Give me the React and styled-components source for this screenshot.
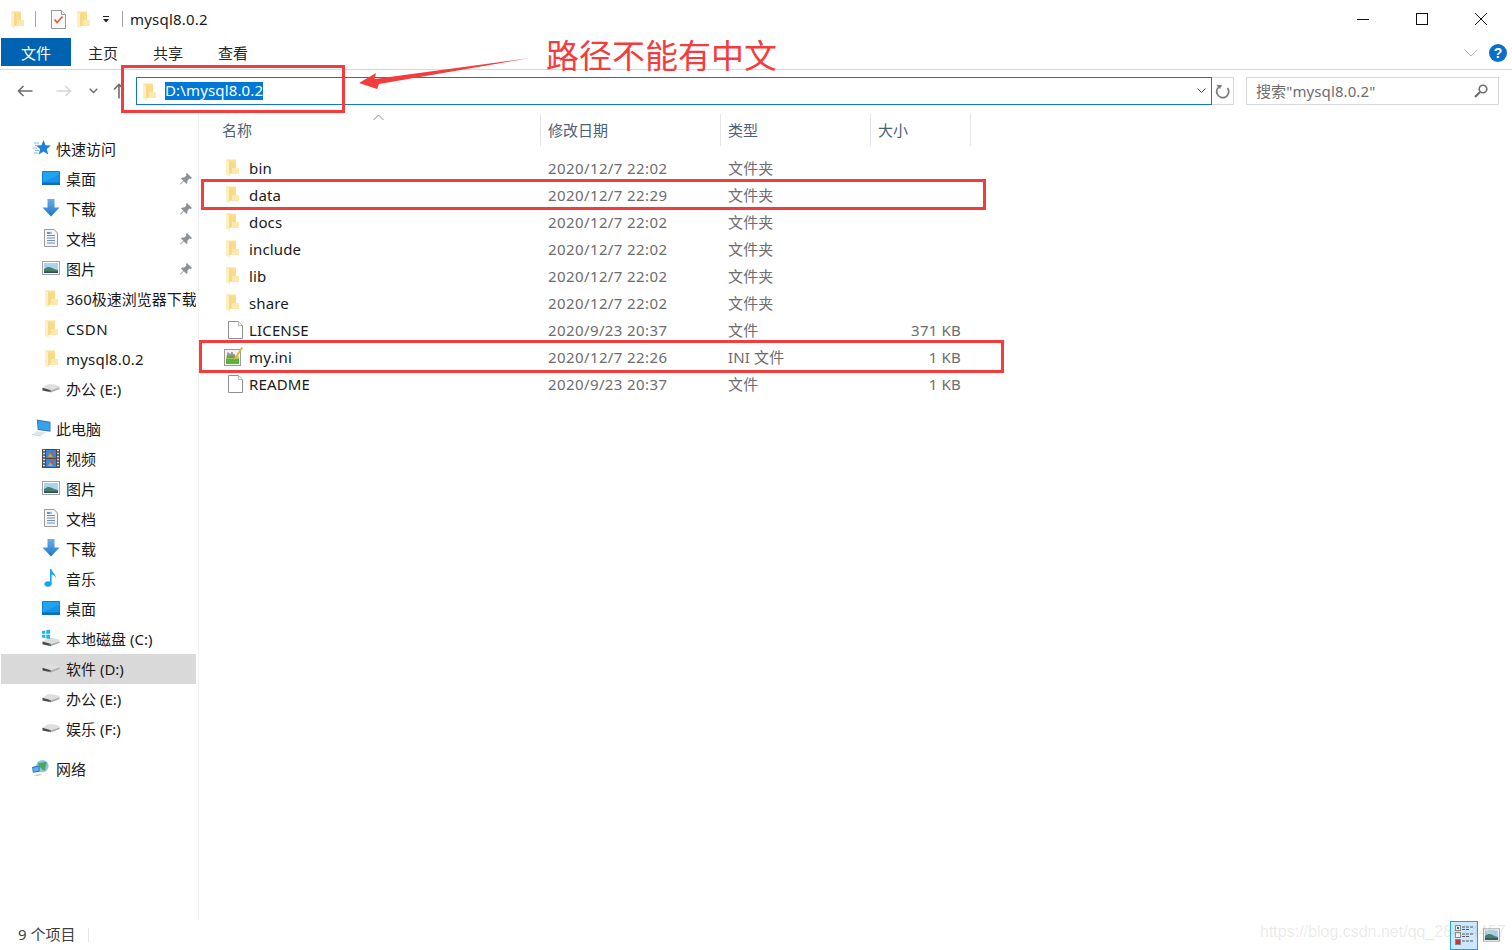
import React from 'react';
import styled, { createGlobalStyle } from 'styled-components';

const GlobalStyle = createGlobalStyle`
  html, body {
    margin: 0;
    padding: 0;
    background: #fff;
    overflow: hidden;
  }
  body {
    font-family: "Noto Sans", "Noto Sans CJK SC", sans-serif;
    font-size: 15px;
    color: #1a1a1a;
  }
`;

const FolderIcon = () => (
  <svg width="13" height="17" viewBox="0 0 13 17">
    <path d="M0 .5 H10 V9 H13 V14.5 H3.5 V17 L0 15.5 Z" fill="#fbe08f" />
    <path d="M3.5 2.5 H10 V9 H13 V14.5 H3.5 Z" fill="#f9dc8a" />
    <path d="M10 9 H13 V14.5 H6 V9 Z" fill="#fde9ae" />
    <path d="M0 .5 L3.5 2.5 V17 L0 15.5 Z" fill="#feefc0" />
    <path d="M3.5 2.5 H4.3 V15 H3.5 Z" fill="#eccb78" />
  </svg>
);

const ChecklistIcon = () => (
  <svg width="15" height="19" viewBox="0 0 15 19">
    <path d="M.5.5 H10.5 L14.5 4.5 V18.5 H.5 Z" fill="#f8f8f8" stroke="#9a9a9a" />
    <path d="M10.5.5 V4.5 H14.5" fill="#fff" stroke="#9a9a9a" />
    <path d="M3.5 9.5 L6 12.5 L11.5 6.5" fill="none" stroke="#e4572e" strokeWidth="1.6" />
  </svg>
);

const DesktopIcon = () => (
  <svg width="18" height="14" viewBox="0 0 18 14">
    <rect x="0" y="0" width="18" height="13" rx="1" fill="#0d7fd8" />
    <rect x="1" y="1" width="16" height="10" fill="#1fa4f2" />
    <path d="M1 11 L17 4 V11 Z" fill="#1794e6" />
    <rect x="0" y="12" width="18" height="2" fill="#0f6fb8" />
  </svg>
);

const DownloadIcon = () => (
  <svg width="18" height="18" viewBox="0 0 18 18">
    <defs>
      <linearGradient id="downArrow" x1="0" y1="0" x2="0" y2="1">
        <stop offset="0" stopColor="#6aaeea" />
        <stop offset="1" stopColor="#1f74c8" />
      </linearGradient>
    </defs>
    <path d="M5.5 0 H12.5 V8.5 H17.5 L9 17.5 L.5 8.5 H5.5 Z" fill="url(#downArrow)" />
  </svg>
);

const DocumentIcon = () => (
  <svg width="14" height="18" viewBox="0 0 14 18">
    <path d="M.5.5 H10 L13.5 4 V17.5 H.5 Z" fill="#f4f4f4" stroke="#9c9c9c" />
    <path d="M3 4 H8 M3 6.5 H11 M3 9 H11 M3 11.5 H11 M3 14 H11" stroke="#6b8fb5" strokeWidth="1" />
    <path d="M3 4 H6" stroke="#2d8ad8" strokeWidth="1.4" />
  </svg>
);

const PictureIcon = () => (
  <svg width="18" height="14" viewBox="0 0 18 14">
    <rect x=".5" y=".5" width="17" height="13" fill="#fff" stroke="#a2a2a2" />
    <rect x="2" y="2" width="14" height="10" fill="#a9d4ee" />
    <path d="M2 8 C6 4.5 9 6 12 8 L16 9 V12 H2 Z" fill="#4c7d6a" />
    <path d="M2 10.5 H16 V12 H2 Z" fill="#2a4d5f" />
  </svg>
);

const DriveShape = () => (
  <>
    <path d="M.5 5 L6 1 H12 L18.5 3 V6 L9.5 9.5 L.5 7.5 Z" fill="#dedede" />
    <path d="M9.5 7.6 L18.5 4.6 V6 L9.5 9.5 Z" fill="#a8a8a8" />
    <path d="M.5 4.8 L9.5 7.4 V9.6 L.5 7.6 Z" fill="#4a4a4a" />
    <rect x="7.5" y="7.8" width="2" height="1.2" fill="#4fc04a" />
  </>
);

const DriveIcon = () => (
  <svg width="19" height="10" viewBox="0 0 19 10">
    <DriveShape />
  </svg>
);

const SystemDriveIcon = () => (
  <svg width="19" height="18" viewBox="0 0 19 18">
    <g transform="translate(0 8)">
      <DriveShape />
    </g>
    <path d="M0 1.5 L3.5 1 V4.5 H0 Z M4.5 .8 L8.5 0 V4.5 H4.5 Z M0 5.5 H3.5 V9 L0 8.5 Z M4.5 5.5 H8.5 V10 L4.5 9.2 Z" fill="#19b5ee" />
  </svg>
);

const VideoIcon = () => (
  <svg width="18" height="19" viewBox="0 0 18 19">
    <rect width="18" height="19" fill="#4a4a4a" />
    <path d="M1 1.5 H3 M1 4.5 H3 M1 7.5 H3 M1 10.5 H3 M1 13.5 H3 M1 16.5 H3 M15 1.5 H17 M15 4.5 H17 M15 7.5 H17 M15 10.5 H17 M15 13.5 H17 M15 16.5 H17" stroke="#ddd" strokeWidth="1.4" />
    <rect x="4" y="1" width="10" height="8" fill="#3c86d8" />
    <rect x="4" y="10" width="10" height="8" fill="#3c86d8" />
    <path d="M6 8 L8 4 L11 8 Z M6 17 L8 13 L11 17 Z" fill="#e0a030" />
    <circle cx="10" cy="3.5" r="1.4" fill="#d94a3a" />
    <circle cx="10" cy="12.5" r="1.4" fill="#d94a3a" />
  </svg>
);

const MusicIcon = () => (
  <svg width="14" height="18" viewBox="0 0 14 18">
    <ellipse cx="4" cy="15" rx="3.6" ry="2.7" fill="#12a5f0" />
    <path d="M6 15 V0 H7.4 C7.6 3.5 12.5 4.5 11.6 9.5 C11 6.5 9 6 7.6 5.6 V15 Z" fill="#12a5f0" />
  </svg>
);

const StarIcon = () => (
  <svg width="18" height="16" viewBox="0 0 18 16">
    <path d="M10.5 0 L12.6 5.2 L18 5.6 L13.8 9.1 L15.2 14.6 L10.5 11.6 L5.8 14.6 L7.1 9.1 L3 5.6 L8.4 5.2 Z" fill="#1f80de" />
    <path d="M1 3 H6 M0 8 H4 M2 5.5 H5 M1 13 H5 M2 10.5 H6" stroke="#7fb9ee" strokeWidth="1" />
  </svg>
);

const PcIcon = () => (
  <svg width="20" height="18" viewBox="0 0 20 18">
    <path d="M5 0 L19.5 2.5 V13 L6 11 Z" fill="#3f7fae" />
    <path d="M6.2 1.5 L18.4 3.6 V11.6 L7 10 Z" fill="#35a4ee" />
    <path d="M0 15.5 L6 12.5 L15 13.5 L9 17.5 Z" fill="#dfe4e8" />
    <path d="M0 15.5 L9 17.5 L9 18 L0 16.2 Z" fill="#b9c0c6" />
  </svg>
);

const NetworkIcon = () => (
  <svg width="20" height="18" viewBox="0 0 20 18">
    <circle cx="11" cy="7" r="6.5" fill="#8cc4e6" />
    <path d="M6 3 C9 5 12 2 15 3 C16 6 13 8 14 12 C10 11 8 8 6 3 Z" fill="#4da65a" />
    <path d="M0 8 L8 6 V13 L1 14 Z" fill="#2478c0" />
    <path d="M1 9 L7 7.5 V12 L1.6 13 Z" fill="#5eb0ea" />
    <path d="M2 16.5 L8 15 L11 16 L5 17.8 Z" fill="#c9cfd4" />
  </svg>
);

const PinIcon = () => (
  <svg width="12" height="12" viewBox="0 0 12 12">
    <path d="M7 0 L12 5 L10.8 6 L9.5 5.6 L7.4 7.8 L7.4 10 L6.4 11 L3.8 8.2 L.6 11.6 L0 11 L3.3 7.7 L1 5.4 L2 4.5 L4.2 4.5 L6.4 2.4 L6 1 Z" fill="#8a9199" />
  </svg>
);

const FileIcon = () => (
  <svg width="15" height="18" viewBox="0 0 15 18">
    <path d="M.5.5 H10.5 L14.5 4.5 V17.5 H.5 Z" fill="#fff" stroke="#8f8f8f" />
    <path d="M10.5.5 V4.5 H14.5" fill="#f2f2f2" stroke="#b5b5b5" />
  </svg>
);

const IniIcon = () => (
  <svg width="19" height="19" viewBox="0 0 19 19">
    <rect x=".5" y="2.5" width="16" height="16" fill="#f2f2f2" stroke="#9a9a9a" />
    <rect x="2" y="11" width="13" height="6" fill="#5eb13c" />
    <rect x="2" y="8.5" width="13" height="3" fill="#bcdc7a" />
    <path d="M4 5.5 V11 M6 6.5 V11 M8 5 V11 M10 7 V11" stroke="#444" strokeWidth="1" />
    <path d="M17.5 0 L19 1 L12 11.5 L10 13 L10.5 10.5 Z" fill="#e8b23c" />
  </svg>
);

const Shell = styled.div`
  position: relative;
  display: flex;
  flex-direction: column;
  width: 1512px;
  height: 950px;
  overflow: hidden;
  background: #fff;
`;

const TitleBar = styled.header`
  display: flex;
  align-items: center;
  height: 38px;
  padding-left: 11px;
  flex: none;
`;

const QuickSlot = styled.span`
  display: flex;
  align-items: center;
  justify-content: center;
  margin-left: ${p => p.$gap}px;
`;

const TitleRule = styled.span`
  width: 1px;
  height: 16px;
  background: #a6a6a6;
  margin-left: ${p => p.$gap}px;
`;

const WindowTitle = styled.span`
  margin-left: 7px;
  font-size: 15px;
  letter-spacing: 0.2px;
  color: #1a1a1a;
`;

const WindowButtons = styled.div`
  display: flex;
  margin-left: auto;
  margin-right: 2px;
`;

const WindowButton = styled.button`
  display: flex;
  align-items: center;
  justify-content: center;
  width: 59px;
  height: 38px;
  padding: 0;
  border: 0;
  background: none;
`;

const RibbonTabs = styled.nav`
  display: flex;
  align-items: flex-start;
  height: 31px;
  padding-left: 1px;
  flex: none;
  border-bottom: 1px solid #d9d9d9;
`;

const FileTab = styled.div`
  display: flex;
  align-items: center;
  justify-content: center;
  width: 70px;
  height: 28px;
  margin-right: 17px;
  background: #0063b1;
  color: #fff;
  font-size: 15px;
`;

const RibbonTab = styled.div`
  width: 65px;
  height: 28px;
  line-height: 30px;
  font-size: 15px;
  color: #262626;
`;

const RibbonRight = styled.div`
  display: flex;
  align-items: center;
  gap: 11px;
  margin-left: auto;
  margin-right: 5px;
  height: 30px;
`;

const HelpBadge = styled.span`
  display: flex;
  align-items: center;
  justify-content: center;
  width: 18px;
  height: 18px;
  border-radius: 50%;
  background: #0a6fc9;
  color: #fff;
  font: bold 14px "Liberation Sans", sans-serif;
`;

const AddressRow = styled.div`
  display: flex;
  align-items: center;
  height: 42px;
  flex: none;
`;

const NavButtons = styled.div`
  display: flex;
  align-items: center;
  width: 136px;
  height: 28px;
  padding-left: 17px;
  box-sizing: border-box;
`;

const NavIcon = styled.span`
  display: flex;
  margin-left: ${p => p.$gap}px;
`;

const AddressBox = styled.div`
  display: flex;
  align-items: center;
  width: 1076px;
  height: 28px;
  box-sizing: border-box;
  border: 1px solid #0f78cc;
  padding-left: 6px;
`;

const AddressText = styled.span`
  margin-left: 9px;
  background: #0078d7;
  color: #fff;
  height: 18px;
  line-height: 17px;
  font-size: 15px;
  letter-spacing: 0.15px;
  white-space: nowrap;
`;

const AddressChevron = styled.span`
  display: flex;
  margin-left: auto;
  margin-right: 5px;
`;

const RefreshBox = styled.div`
  display: flex;
  align-items: center;
  justify-content: center;
  width: 22px;
  height: 28px;
  box-sizing: border-box;
  border: 1px solid #d9d9d9;
  border-left: 0;
`;

const SearchBox = styled.div`
  display: flex;
  align-items: center;
  justify-content: space-between;
  width: 253px;
  height: 28px;
  margin-left: 12px;
  box-sizing: border-box;
  border: 1px solid #d9d9d9;
  padding: 0 10px 0 9px;
  font-size: 15px;
  letter-spacing: 0.1px;
  color: #6d6d6d;
`;

const SearchText = styled.span`
  margin-top: -2px;
`;

const Body = styled.div`
  display: flex;
  flex: 1;
  min-height: 0;
`;

const Sidebar = styled.aside`
  width: 197px;
  flex: none;
  padding: 22px 0 0 1px;
  border-right: 1px solid #f0f0f0;
  overflow: hidden;
`;

const NavGroup = styled.ul`
  list-style: none;
  margin: 0 0 10px;
  padding: 0;
`;

const NavRow = styled.li`
  display: flex;
  align-items: center;
  width: 195px;
  height: 30px;
  padding-left: ${p => p.$top ? 31 : 41}px;
  box-sizing: border-box;
  background: ${p => p.$active ? '#d9d9d9' : 'transparent'};
  white-space: nowrap;
  overflow: hidden;
`;

const NavGlyph = styled.span`
  display: flex;
  align-items: center;
  justify-content: center;
  flex: none;
  width: ${p => p.$top ? 19 : 18}px;
  margin: -2px ${p => p.$top ? 5 : 6}px 0 0;
`;

const NavLabel = styled.span`
  flex: 1;
  overflow: hidden;
  color: #1a1a1a;
  margin-top: ${p => p.$spread ? 0 : -2}px;
  letter-spacing: ${p => p.$spread || 0}px;
`;

const NavPin = styled.span`
  display: flex;
  flex: none;
  margin: 0 4px 0 0;
`;

const Listing = styled.main`
  flex: 1;
  padding-left: 15px;
`;

const Columns = `
  display: grid;
  grid-template-columns: 326px 180px 150px 100px;
  width: 756px;
`;

const HeaderRow = styled.div`
  ${Columns}
  position: relative;
  height: 32px;
  margin: 2px 0 8px 1px;
`;

const SortCaret = styled.span`
  position: absolute;
  left: 158px;
  top: 0;
  display: flex;
`;

const HeaderCell = styled.div`
  display: flex;
  align-items: center;
  padding: 0 0 2px 7px;
  border-right: 1px solid #e5e5e5;
  font-size: 15px;
  color: #4c607a;
`;

const FileRow = styled.div`
  ${Columns}
  height: 27px;
  align-items: center;
`;

const NameCell = styled.div`
  display: flex;
  align-items: center;
  padding-left: ${p => p.$kind === 'ini' ? 10 : 12}px;
  letter-spacing: 0.15px;
  color: #1a1a1a;
`;

const NameGlyph = styled.span`
  display: flex;
  justify-content: ${p => p.$kind === 'folder' ? 'flex-start' : 'center'};
  width: ${p => p.$kind === 'ini' ? 19 : 18}px;
  margin-right: ${p => p.$kind === 'ini' ? 6 : 5}px;
`;

const DateCell = styled.div`
  padding-left: 8px;
  color: #6d6d6d;
  letter-spacing: 0.4px;
  white-space: nowrap;
`;

const TypeCell = styled.div`
  padding-left: 8px;
  color: #6d6d6d;
  letter-spacing: 0.15px;
  white-space: nowrap;
`;

const SizeCell = styled.div`
  padding-right: 9px;
  text-align: right;
  letter-spacing: 0.2px;
  color: #6d6d6d;
`;

const StatusBar = styled.footer`
  display: flex;
  align-items: center;
  height: 30px;
  flex: none;
  padding-left: 18px;
  font-size: 15px;
  color: #404040;
`;

const StatusText = styled.span`
  margin-bottom: 4px;
`;

const StatusRule = styled.span`
  width: 1px;
  height: 14px;
  background: #e5e5e5;
  margin-left: 13px;
`;

const ViewButtons = styled.div`
  display: flex;
  align-items: center;
  margin-left: auto;
  margin-right: 12px;
  gap: 5px;
`;

const ViewButton = styled.span`
  display: flex;
  align-items: center;
  justify-content: center;
  width: ${p => p.$on ? 28 : 17}px;
  height: 29px;
  box-sizing: border-box;
  background: ${p => p.$on ? '#cce8ff' : 'transparent'};
  border: ${p => p.$on ? '1px solid #26a0da' : '0'};
`;

const Watermark = styled.span`
  position: absolute;
  left: 1260px;
  top: 923px;
  font: 16px "Liberation Sans", sans-serif;
  color: rgba(120, 120, 120, 0.16);
  white-space: nowrap;
  pointer-events: none;
`;

const RedBox = styled.div`
  position: absolute;
  left: ${p => p.$x}px;
  top: ${p => p.$y}px;
  width: ${p => p.$w}px;
  height: ${p => p.$h}px;
  box-sizing: border-box;
  border: 3px solid #f53c3c;
  pointer-events: none;
`;

const Callout = styled.span`
  position: absolute;
  left: 546px;
  top: 31px;
  font-size: 33px;
  line-height: 46px;
  font-family: "Noto Sans CJK SC", sans-serif;
  color: #f53c3c;
  white-space: nowrap;
`;

const CalloutArrow = styled.svg`
  position: absolute;
  left: 355px;
  top: 54px;
`;

const quickAccess = [
  { icon: <DesktopIcon />, label: '桌面', pin: true },
  { icon: <DownloadIcon />, label: '下载', pin: true },
  { icon: <DocumentIcon />, label: '文档', pin: true },
  { icon: <PictureIcon />, label: '图片', pin: true },
  { icon: <FolderIcon />, label: '360极速浏览器下载' },
  { icon: <FolderIcon />, label: 'CSDN', spread: 0.5 },
  { icon: <FolderIcon />, label: 'mysql8.0.2', spread: 0.2 },
  { icon: <DriveIcon />, label: '办公 (E:)' },
];

const thisPc = [
  { icon: <VideoIcon />, label: '视频' },
  { icon: <PictureIcon />, label: '图片' },
  { icon: <DocumentIcon />, label: '文档' },
  { icon: <DownloadIcon />, label: '下载' },
  { icon: <MusicIcon />, label: '音乐' },
  { icon: <DesktopIcon />, label: '桌面' },
  { icon: <SystemDriveIcon />, label: '本地磁盘 (C:)' },
  { icon: <DriveIcon />, label: '软件 (D:)', active: true },
  { icon: <DriveIcon />, label: '办公 (E:)' },
  { icon: <DriveIcon />, label: '娱乐 (F:)' },
];

const files = [
  { name: 'bin', date: '2020/12/7 22:02', type: '文件夹', kind: 'folder' },
  { name: 'data', date: '2020/12/7 22:29', type: '文件夹', kind: 'folder' },
  { name: 'docs', date: '2020/12/7 22:02', type: '文件夹', kind: 'folder' },
  { name: 'include', date: '2020/12/7 22:02', type: '文件夹', kind: 'folder' },
  { name: 'lib', date: '2020/12/7 22:02', type: '文件夹', kind: 'folder' },
  { name: 'share', date: '2020/12/7 22:02', type: '文件夹', kind: 'folder' },
  { name: 'LICENSE', date: '2020/9/23 20:37', type: '文件', size: '371 KB', kind: 'file' },
  { name: 'my.ini', date: '2020/12/7 22:26', type: 'INI 文件', size: '1 KB', kind: 'ini' },
  { name: 'README', date: '2020/9/23 20:37', type: '文件', size: '1 KB', kind: 'file' },
];

const fileIcons = {
  folder: <FolderIcon />,
  file: <FileIcon />,
  ini: <IniIcon />,
};

const SideItem = ({ item, top }) => (
  <NavRow $top={top} $active={item.active}>
    <NavGlyph $top={top}>{item.icon}</NavGlyph>
    <NavLabel $spread={item.spread}>{item.label}</NavLabel>
    {item.pin && <NavPin><PinIcon /></NavPin>}
  </NavRow>
);

const App = () => {
  return (
    <Shell>
      <GlobalStyle />
      <TitleBar>
        <QuickSlot $gap={0}><FolderIcon /></QuickSlot>
        <TitleRule $gap={11} />
        <QuickSlot $gap={15}><ChecklistIcon /></QuickSlot>
        <QuickSlot $gap={11}><FolderIcon /></QuickSlot>
        <QuickSlot $gap={12}>
          <svg width="8" height="7" viewBox="0 0 8 7">
            <path d="M1 .5 H7" stroke="#222" />
            <path d="M1 3 H7 L4 6.5 Z" fill="#222" />
          </svg>
        </QuickSlot>
        <TitleRule $gap={12} />
        <WindowTitle>mysql8.0.2</WindowTitle>
        <WindowButtons>
          <WindowButton>
            <svg width="12" height="12" viewBox="0 0 12 12"><path d="M0 6.5 H12" stroke="#111" /></svg>
          </WindowButton>
          <WindowButton>
            <svg width="12" height="12" viewBox="0 0 12 12"><rect x=".5" y=".5" width="11" height="11" fill="none" stroke="#111" /></svg>
          </WindowButton>
          <WindowButton>
            <svg width="12" height="12" viewBox="0 0 12 12"><path d="M0 0 L12 12 M12 0 L0 12" stroke="#111" /></svg>
          </WindowButton>
        </WindowButtons>
      </TitleBar>

      <RibbonTabs>
        <FileTab>文件</FileTab>
        <RibbonTab>主页</RibbonTab>
        <RibbonTab>共享</RibbonTab>
        <RibbonTab>查看</RibbonTab>
        <RibbonRight>
          <svg width="14" height="8" viewBox="0 0 14 8"><path d="M.5.5 L7 7 L13.5.5" fill="none" stroke="#b5b5b5" /></svg>
          <HelpBadge>?</HelpBadge>
        </RibbonRight>
      </RibbonTabs>

      <AddressRow>
        <NavButtons>
          <NavIcon $gap={0}>
            <svg width="16" height="12" viewBox="0 0 16 12"><path d="M15.5 6 H1.5 M6.5 1 L1.5 6 L6.5 11" fill="none" stroke="#6d6d6d" strokeWidth="1.6" /></svg>
          </NavIcon>
          <NavIcon $gap={23}>
            <svg width="16" height="12" viewBox="0 0 16 12"><path d="M.5 6 H14.5 M9.5 1 L14.5 6 L9.5 11" fill="none" stroke="#d5d5d5" strokeWidth="1.6" /></svg>
          </NavIcon>
          <NavIcon $gap={17}>
            <svg width="9" height="6" viewBox="0 0 9 6"><path d="M.7.7 L4.5 4.5 L8.3.7" fill="none" stroke="#6d6d6d" strokeWidth="1.4" /></svg>
          </NavIcon>
          <NavIcon $gap={15}>
            <svg width="12" height="16" viewBox="0 0 12 16"><path d="M6 15.5 V1.5 M1 6.5 L6 1.5 L11 6.5" fill="none" stroke="#6d6d6d" strokeWidth="1.6" /></svg>
          </NavIcon>
        </NavButtons>
        <AddressBox>
          <FolderIcon />
          <AddressText>D:\mysql8.0.2</AddressText>
          <AddressChevron>
            <svg width="9" height="6" viewBox="0 0 9 6"><path d="M.5.5 L4.5 4.5 L8.5.5" fill="none" stroke="#444" /></svg>
          </AddressChevron>
        </AddressBox>
        <RefreshBox>
          <svg width="15" height="15" viewBox="0 0 15 15">
            <path d="M4.3 2.6 A6 6 0 1 0 10.5 2.2" fill="none" stroke="#7a7a7a" strokeWidth="1.7" transform="rotate(25 7.5 7.5)" />
            <path d="M1.5 0.8 L6 1 L5.2 5.2 Z" fill="#7a7a7a" />
          </svg>
        </RefreshBox>
        <SearchBox>
          <SearchText>搜索"mysql8.0.2"</SearchText>
          <svg width="14" height="14" viewBox="0 0 14 14">
            <circle cx="9" cy="5" r="3.8" fill="none" stroke="#6d6d6d" strokeWidth="1.6" />
            <path d="M6 8 L1 13" stroke="#6d6d6d" strokeWidth="2.2" />
          </svg>
        </SearchBox>
      </AddressRow>

      <Body>
        <Sidebar>
          <NavGroup>
            <SideItem top item={{ icon: <StarIcon />, label: '快速访问' }} />
            {quickAccess.map((item, i) => <SideItem key={i} item={item} />)}
          </NavGroup>
          <NavGroup>
            <SideItem top item={{ icon: <PcIcon />, label: '此电脑' }} />
            {thisPc.map((item, i) => <SideItem key={i} item={item} />)}
          </NavGroup>
          <NavGroup>
            <SideItem top item={{ icon: <NetworkIcon />, label: '网络' }} />
          </NavGroup>
        </Sidebar>

        <Listing>
          <HeaderRow>
            <SortCaret>
              <svg width="11" height="7" viewBox="0 0 11 7"><path d="M.5 6 L5.5 1 L10.5 6" fill="none" stroke="#8a8a8a" /></svg>
            </SortCaret>
            <HeaderCell>名称</HeaderCell>
            <HeaderCell>修改日期</HeaderCell>
            <HeaderCell>类型</HeaderCell>
            <HeaderCell>大小</HeaderCell>
          </HeaderRow>
          {files.map(file => (
            <FileRow key={file.name}>
              <NameCell $kind={file.kind}>
                <NameGlyph $kind={file.kind}>{fileIcons[file.kind]}</NameGlyph>
                {file.name}
              </NameCell>
              <DateCell>{file.date}</DateCell>
              <TypeCell>{file.type}</TypeCell>
              <SizeCell>{file.size}</SizeCell>
            </FileRow>
          ))}
        </Listing>
      </Body>

      <StatusBar>
        <StatusText>9 个项目</StatusText>
        <StatusRule />
        <ViewButtons>
          <ViewButton $on>
            <svg width="18" height="20" viewBox="0 0 18 20">
              <rect x=".5" y=".5" width="5" height="5" fill="#f5f5f5" stroke="#888" />
              <rect x=".5" y="7.5" width="5" height="5" fill="#f5f5f5" stroke="#888" />
              <rect x=".5" y="14.5" width="5" height="5" fill="#c9352b" stroke="#888" />
              <rect x="2" y="2" width="2" height="2" fill="#3c7a55" />
              <path d="M7 2 H18 M7 4.5 H14 M7 9 H18 M7 11.5 H14 M7 16 H18" stroke="#555" strokeDasharray="3 1" />
            </svg>
          </ViewButton>
          <ViewButton>
            <PictureIcon />
          </ViewButton>
        </ViewButtons>
      </StatusBar>

      <Watermark>https://blog.csdn.net/qq_28414457</Watermark>

      <RedBox $x={121} $y={65} $w={224} $h={48} />
      <RedBox $x={201} $y={179} $w={785} $h={31} />
      <RedBox $x={199} $y={340} $w={805} $h={33} />
      <CalloutArrow width="180" height="40" viewBox="0 0 180 40">
        <path d="M4 29 L21 19 L19.5 25 L175 4 L24 30 L22 35 Z" fill="#f53c3c" />
      </CalloutArrow>
      <Callout>路径不能有中文</Callout>
    </Shell>
  );
};

export default App;
